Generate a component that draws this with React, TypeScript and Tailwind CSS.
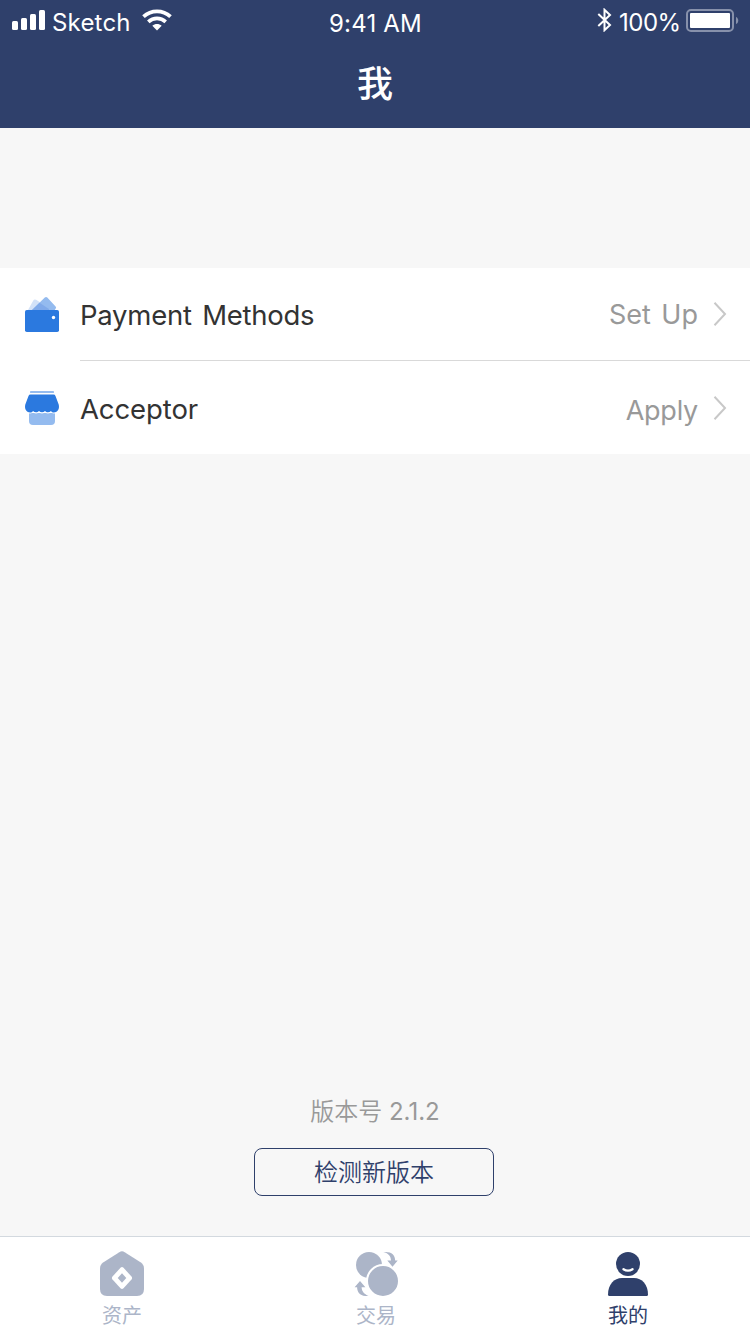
import type { ReactNode } from "react";

const latin = "font-['Inter','Noto_Sans_CJK_SC',sans-serif]";
const cjk = "font-['Noto_Sans_CJK_SC',sans-serif]";

function StatusBar() {
  return (
    <div className={`grid h-10 grid-cols-3 text-[24px] leading-[30px] text-white ${latin}`}>
      <div className="flex items-start pl-3">
        <svg className="mt-[10px] h-5 w-[33px]" viewBox="0 0 33 20" fill="#fff">
          <rect x="0" y="11" width="6" height="9" rx="1.5" />
          <rect x="9" y="8" width="6" height="12" rx="1.5" />
          <rect x="18" y="4" width="6" height="16" rx="1.5" />
          <rect x="27" y="0" width="6" height="20" rx="1.5" />
        </svg>
        <span className="ml-[7px] mt-2 w-[78px] whitespace-nowrap tracking-[0.2px]">Sketch</span>
        <svg className="ml-[12px] mt-[9px] h-[22px] w-[30px]" viewBox="0 0 30 22" fill="none" stroke="#fff">
          <path d="M1.5 7.7C9.2.6 20.8.6 28.5 7.7" strokeWidth="3.8" />
          <path d="M6.3 12.9C11.3 8.3 18.7 8.3 23.7 12.9" strokeWidth="3.7" />
          <path d="M15 21.5l-4.7-4.7c2.7-2.4 6.7-2.4 9.4 0z" fill="#fff" stroke="none" />
        </svg>
      </div>
      <div className="mt-[9px] whitespace-nowrap pl-px text-center tracking-[0.2px]">9:41 AM</div>
      <div className="flex items-start justify-end pr-[11px]">
        <svg className="mr-px mt-2 h-6 w-4" viewBox="0 0 16 24" fill="none" stroke="#fff" strokeWidth="2">
          <path d="M1.3 6 13 17l-5.5 5.2V1.8L13 7 1.3 18" />
        </svg>
        <span className="ml-[5px] mt-2 w-[62px] whitespace-nowrap tracking-[-0.5px]">100%</span>
        <svg className="ml-[5px] mt-[9px] h-[23px] w-[53px]" viewBox="0 0 53 23">
          <rect x="1" y="1" width="46" height="21" rx="4" fill="none" stroke="#8791ab" strokeWidth="2" />
          <rect x="4" y="4" width="40" height="15" rx="1" fill="#fff" />
          <path d="M50 8c3 1 3 6 0 7z" fill="#8791ab" />
        </svg>
      </div>
    </div>
  );
}

function WalletIcon() {
  return (
    <svg className="h-[36px] w-[34px]" viewBox="0 0 34 36">
      <path d="M3 14 8.3 4.5q1-1.8 2.8-.7L24 12v3H3z" fill="#d3e2f8" />
      <path d="M7 14 19.8 1.6q1.3-1.2 2.5 0l8.3 9q1 1.1 0 2.2L29 15H7z" fill="#94bbef" />
      <path d="M7 14l7.5-7.2L24 13v2H7z" fill="#80aaea" />
      <rect y="14" width="34" height="22" rx="1.8" fill="#2b79df" />
      <circle cx="28.5" cy="21.5" r="1.7" fill="#fff" />
    </svg>
  );
}

function ShopIcon() {
  return (
    <svg className="h-[35px] w-[34px]" viewBox="0 0 34 35">
      <rect x="5" y="1" width="24" height="2" rx=".4" fill="#94bbef" />
      <path d="M4 21h26v10q0 4-4 4H8q-4 0-4-4z" fill="#94bbef" />
      <path
        d="M5.500 4.600h23q1.500 0 2 1.400L33.700 14.500C34.800 19 32.500 22.400 29 22.400c-1.300 0-2.300-.5-3-1.500-1.800 1.900-4.300 1.900-6 0-1.800 1.900-4.200 1.900-6 0-1.700 1.900-4.200 1.900-6 0-.7 1-1.700 1.500-3 1.500C1.500 22.400-.8 19 .3 14.500L3.500 6q.5-1.400 2-1.400z"
        fill="#2b79df"
        stroke="#fff"
        strokeWidth="2.400"
        paintOrder="stroke"
      />
    </svg>
  );
}

function Chevron() {
  return (
    <svg className="h-6 w-[14px]" viewBox="0 0 14 24" fill="none" stroke="#c8c8c8" strokeWidth="2">
      <path d="M1.5 .7 12 12 1.5 23.3" />
    </svg>
  );
}

type RowProps = {
  icon: ReactNode;
  iconClass: string;
  label: string;
  labelClass: string;
  action: string;
  actionClass: string;
  chevronClass: string;
};

function Row({ icon, iconClass, label, labelClass, action, actionClass, chevronClass }: RowProps) {
  return (
    <div className="flex h-[93px] items-start bg-white pl-[25px]">
      <div className={`w-[34px] ${iconClass}`}>{icon}</div>
      <div className={`ml-[21px] text-[27.5px] leading-[34px] text-[#333] ${labelClass}`}>{label}</div>
      <div className={`ml-auto text-[27px] leading-[34px] text-[#999] ${actionClass}`}>{action}</div>
      <div className={`ml-[15px] mr-[23px] ${chevronClass}`}>
        <Chevron />
      </div>
    </div>
  );
}

function AssetsIcon() {
  return (
    <svg className="h-[46px] w-11" viewBox="0 0 44 46">
      <path
        fill="#acb5c8"
        d="M19.3 2.2q2.7-1.7 5.4 0L40.5 12.3Q44 14.6 44 18.5V39q0 7-7 7H7q-7 0-7-7V18.5Q0 14.6 3.5 12.3z"
      />
      <path
        d="M20.5 17.8q1.5-1.5 3 0l8 8.7q1.2 1.5 0 3l-8 8.7q-1.5 1.5-3 0l-8-8.700q-1.2-1.5 0-3z"
        fill="#fff"
      />
      <path d="M22 23.3l4.3 4.7-4.3 4.7-4.3-4.7z" fill="#acb5c8" />
    </svg>
  );
}

function TradeIcon() {
  return (
    <svg className="h-[46px] w-11" viewBox="0 0 44 46" fill="#acb5c8">
      <circle cx="15" cy="15" r="13" />
      <circle cx="29" cy="31" r="16" stroke="#fff" strokeWidth="2" />
      <path d="M29.3 2c8-.8 11.7 2.5 11.9 8.5h2.5l-5.2 6.200-5.2-6.200H37c-.2-4.200-2.200-7-7.700-8.500z" />
      <path d="M14.5 46C6.6 46.6 3.2 43 3.1 37.3H.6L6 31l5.4 6.300H7.6c.2 4.300 2.500 6.700 6.900 8.700z" />
    </svg>
  );
}

function ProfileIcon() {
  return (
    <svg className="h-[46px] w-11" viewBox="0 0 44 46" fill="#2f406b">
      <circle cx="22" cy="14" r="12" />
      <path d="M17.5 19.200q4.500 3 9 0" fill="none" stroke="#fff" strokeWidth="2.300" strokeLinecap="round" />
      <path d="M2 44.500C2 34.500 8 28 16 28h12c8 0 14 6.500 14 16.500q0 1.500-1.500 1.500h-37Q2 46 2 44.500z" />
    </svg>
  );
}

type TabProps = { icon: ReactNode; label: string; className: string };

function Tab({ icon, label, className }: TabProps) {
  return (
    <div className={`flex flex-col items-center pt-[13px] ${className}`}>
      {icon}
      <span className={`mt-[5px] text-[20px] leading-[28px] ${cjk}`}>{label}</span>
    </div>
  );
}

export default function App() {
  return (
    <div className={`flex h-[1334px] w-[750px] flex-col overflow-hidden bg-[#f7f7f7] ${latin}`}>
      <header className="h-32 shrink-0 bg-[#2f406b]">
        <StatusBar />
        <h1 className={`mt-4 text-center text-[36px] font-medium leading-[50px] text-white ${cjk}`}>我</h1>
      </header>

      <main className="flex flex-1 flex-col pt-[140px]">
        <Row
          icon={<WalletIcon />}
          iconClass="mt-[28px]"
          label="Payment Methods"
          labelClass="mt-[30px] tracking-[-0.25px] [word-spacing:3px]"
          action="Set Up"
          actionClass="mt-[30px] [word-spacing:3px]"
          chevronClass="mt-[34px]"
        />
        <div className="-mt-px bg-white pl-20">
          <div className="h-px bg-[#d9d9d9]" />
        </div>
        <Row
          icon={<ShopIcon />}
          iconClass="mt-[29px]"
          label="Acceptor"
          labelClass="mt-[31px] tracking-[-0.1px]"
          action="Apply"
          actionClass="mt-[33px] tracking-[-0.25px]"
          chevronClass="mt-[35px]"
        />
        <div className="mt-auto text-center text-[24px] leading-[34px] text-[#999]">
          <span className="font-[350]">版本号</span> 2.1.2
        </div>
        <button
          className={`mb-10 ml-[254px] mt-[19px] h-12 w-[240px] rounded-lg border border-[#2f406b] pb-[2px] text-[24px] font-[350] leading-[34px] text-[#2f406b] ${cjk}`}
        >
          检测新版本
        </button>
      </main>

      <nav className="flex h-[98px] shrink-0 border-t border-[#d3d9df] bg-white">
        <Tab icon={<AssetsIcon />} label="资产" className="w-[244px] text-[#acb5c8]" />
        <Tab icon={<TradeIcon />} label="交易" className="w-[264px] text-[#acb5c8]" />
        <Tab icon={<ProfileIcon />} label="我的" className="w-[240px] text-[#2f406b]" />
      </nav>
    </div>
  );
}
